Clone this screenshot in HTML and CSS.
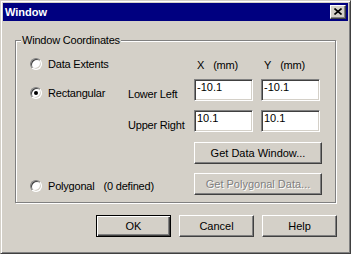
FILE: index.html
```html
<!DOCTYPE html>
<html lang="en">
<head>
    <meta charset="UTF-8">
    <title>Window</title>
    <link rel="stylesheet" href="styles.css">
</head>
<body>

<div class="window">
    <div class="titlebar">
        <span class="title">Window</span>
        <button class="close" aria-label="Close">
            <svg width="8" height="7" viewBox="0 0 8 7"><path d="M0.5 0.5 L7.5 6.5 M7.5 0.5 L0.5 6.5" stroke="#000" stroke-width="1.6" fill="none"/></svg>
        </button>
    </div>

    <div class="content">
        <div class="group">
            <span class="legend">Window Coordinates</span>
            <div class="coords">
                <label class="radio row-a"><span class="dot"></span>Data Extents</label>
                <span class="head col-x row-a">X<span class="unit">(mm)</span></span>
                <span class="head col-y row-a">Y<span class="unit">(mm)</span></span>

                <label class="radio row-b rect"><span class="dot on"></span>Rectangular</label>
                <span class="lbl row-b">Lower Left</span>
                <input class="field col-x row-b" type="text" value="-10.1">
                <input class="field col-y row-b" type="text" value="-10.1">

                <span class="lbl row-c">Upper Right</span>
                <input class="field col-x row-c" type="text" value="10.1">
                <input class="field col-y row-c" type="text" value="10.1">

                <button class="btn wide row-d">Get Data Window...</button>

                <label class="radio row-e poly"><span class="dot"></span>Polygonal<span class="note">(0 defined)</span></label>
                <button class="btn wide row-e" disabled>Get Polygonal Data...</button>
            </div>
        </div>

        <div class="actions">
            <button class="btn default">OK</button>
            <button class="btn">Cancel</button>
            <button class="btn">Help</button>
        </div>
    </div>
</div>

</body>
</html>
```

FILE: styles.css
```css
body {
    margin: 0;
    background: #d4d0c8;
    font-family: "Liberation Sans", Arial, sans-serif;
    font-size: 11px;
    letter-spacing: -0.2px;
    color: #000;
}
.window {
    width: 351px;
    height: 254px;
    box-sizing: border-box;
    padding: 2px;
    border: 1px solid;
    border-color: #d4d0c8 #404040 #404040 #d4d0c8;
    box-shadow: inset 1px 1px #fff, inset -1px -1px #808080;
    background: #d4d0c8;
}
.titlebar {
    height: 18px;
    background: #000080;
    display: flex;
    align-items: center;
    justify-content: space-between;
    padding: 0 2px;
}
.title {
    color: #fff;
    font-weight: bold;
    letter-spacing: 0;
    line-height: 14px;
}
.close {
    width: 16px;
    height: 14px;
    padding: 0;
    box-sizing: border-box;
    background: #d4d0c8;
    border: 1px solid;
    border-color: #fff #404040 #404040 #fff;
    box-shadow: inset -1px -1px #808080, inset 1px 1px #d4d0c8;
    display: flex;
    align-items: center;
    justify-content: center;
}
.close svg {
    display: block;
    margin: 0 1px 1px 0;
}
.content {
    padding: 0 12px;
}
.group {
    position: relative;
    margin-top: 19px;
    height: 163px;
    box-sizing: border-box;
    border: 1px solid #808080;
    box-shadow: inset 1px 1px #fff, 1px 1px #fff;
    padding: 16px 0 0 14px;
}
.legend {
    position: absolute;
    top: -8px;
    left: 5px;
    padding: 0 1px;
    line-height: 14px;
    background: #d4d0c8;
}
.coords {
    display: grid;
    grid-template-columns: 98px 66px 59px 8px 59px;
    grid-template-rows: 22px 31px 32px 31px 22px;
    line-height: 14px;
}
.row-a { grid-row: 1; }
.row-b { grid-row: 2; }
.row-c { grid-row: 3; }
.row-d { grid-row: 4; }
.row-e { grid-row: 5; }
.col-x { grid-column: 3; }
.col-y { grid-column: 5; }
.radio {
    grid-column: 1;
    display: flex;
    align-items: center;
    align-self: start;
    height: 14px;
}
.radio.rect { margin-top: 7px; }
.radio.poly { grid-column: 1 / 3; margin-top: 6px; }
.dot {
    position: relative;
    width: 12px;
    height: 12px;
    box-sizing: border-box;
    border-radius: 50%;
    background: #fff;
    border: 1px solid;
    border-color: #808080 #fff #fff #808080;
    box-shadow: inset 1px 1px #404040, inset -1px -1px #d4d0c8;
    margin-right: 6px;
}
.dot.on::after {
    content: "";
    position: absolute;
    left: 3px;
    top: 3px;
    width: 4px;
    height: 4px;
    border-radius: 50%;
    background: #000;
}
.note { margin-left: 9px; }
.head {
    align-self: start;
    padding-left: 3px;
    margin-top: 1px;
}
.unit { margin-left: 9px; }
.lbl {
    grid-column: 2;
    align-self: start;
    margin-top: 8px;
}
.field {
    align-self: start;
    width: 59px;
    height: 22px;
    box-sizing: border-box;
    margin: 0;
    padding: 0 1px 6px 2px;
    font: inherit;
    color: #000;
    background: #fff;
    border: 1px solid;
    border-color: #808080 #fff #fff #808080;
    box-shadow: inset 1px 1px #404040, inset -1px -1px #d4d0c8;
    outline: none;
}
.btn {
    height: 22px;
    width: 75px;
    box-sizing: border-box;
    padding: 0 0 1px;
    margin: 0;
    font: inherit;
    color: #000;
    background: #d4d0c8;
    border: 1px solid;
    border-color: #fff #404040 #404040 #fff;
    box-shadow: inset -1px -1px #808080, inset 1px 1px #d4d0c8;
}
.btn.wide {
    grid-column: 3 / 6;
    width: 128px;
    align-self: start;
}
.btn:disabled {
    color: #808080;
    text-shadow: 1px 1px #fff;
}
.btn.default {
    border-color: #000;
    box-shadow: inset 1px 1px #fff, inset -1px -1px #404040, inset -2px -2px #808080;
}
.actions {
    display: flex;
    justify-content: flex-end;
    gap: 8px;
    margin-top: 12px;
    margin-right: -1px;
}
```
